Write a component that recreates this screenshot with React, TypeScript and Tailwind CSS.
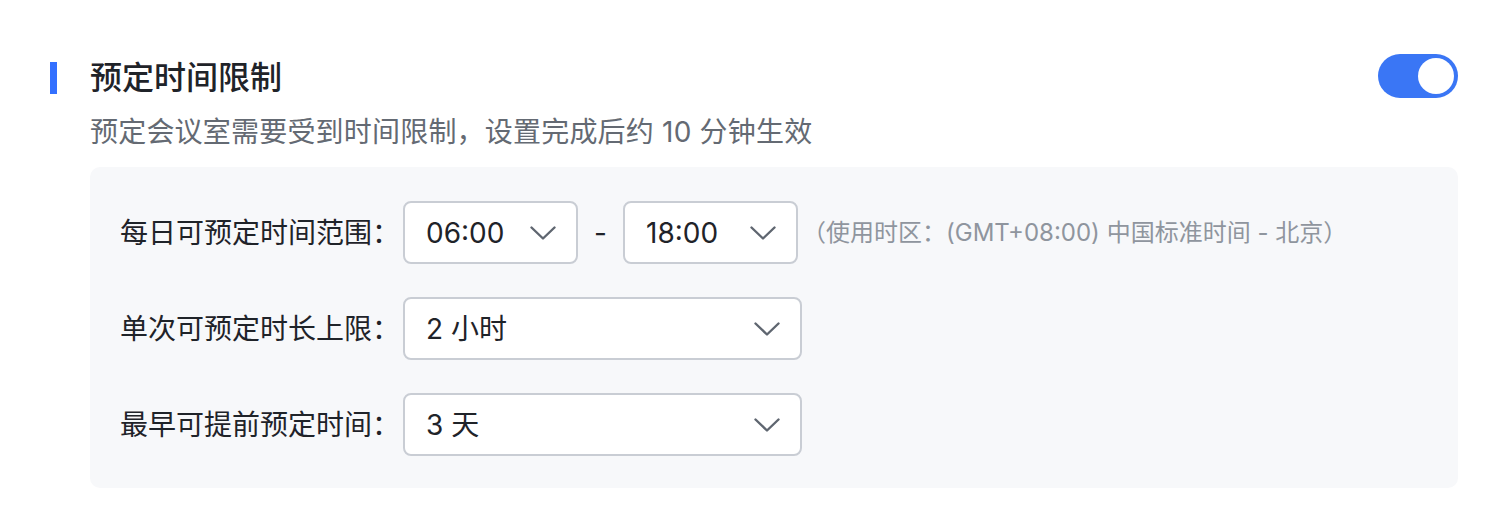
import React from "react";

const Chevron = () => (
  <svg width="26" height="14" viewBox="0 0 26 14" fill="none" className="shrink-0">
    <path d="M1.5 1.5 L13 12.5 L24.5 1.5" stroke="#5f6670" strokeWidth="2.4" strokeLinecap="round" strokeLinejoin="round" />
  </svg>
);

function Select({ value, wide }: { value: string; wide?: boolean }) {
  return (
    <div
      className={`${wide ? "w-[399px]" : "w-[175px]"} h-[63px] shrink-0 bg-white border-2 border-[#c9cdd4] rounded-[8px] flex items-center justify-between pl-[21px] pr-[20px]`}
    >
      <span className="text-[28px] leading-[40px] text-[#1f2329]">{value}</span>
      <Chevron />
    </div>
  );
}

export default function App() {
  return (
    <div
      className="w-[1502px] h-[530px] bg-white pl-[50px] pr-[44px] pt-[54px]"
      style={{ fontFamily: 'Inter, "Noto Sans CJK SC", sans-serif' }}
    >
      <div className="flex justify-between items-start">
        <div className="flex items-center h-[48px]">
          <div className="w-[7px] h-[32px] bg-[#3370ff]" />
          <div className="ml-[33px] text-[32px] leading-[48px] font-medium text-[#1f2329]">预定时间限制</div>
        </div>
        <div className="w-[80px] h-[44px] rounded-full bg-[#3a76f5] flex items-center justify-end pr-[4px]">
          <div className="w-[36px] h-[36px] rounded-full bg-white" />
        </div>
      </div>
      <div className="pl-[40px]">
        <div className="mt-[10px] text-[28px] leading-[40px] text-[#646a73] tracking-[0.2px]">
          预定会议室需要受到时间限制，设置完成后约 10 分钟生效
        </div>
        <div className="mt-[15px] bg-[#f7f8fa] rounded-[10px] pl-[30px] pt-[34px] pb-[32px] flex flex-col gap-[33px]">
          <div className="flex items-center">
            <div className="w-[283px] shrink-0 text-[28px] leading-[40px] text-[#1f2329]">每日可预定时间范围：</div>
            <Select value="06:00" />
            <div className="w-[45px] flex justify-center text-[28px] leading-[40px] text-[#1f2329]">-</div>
            <Select value="18:00" />
            <div className="ml-[4px] text-[24px] leading-[34px] text-[#8f959e]">（使用时区：(GMT+08:00) 中国标准时间 - 北京）</div>
          </div>
          <div className="flex items-center">
            <div className="w-[283px] shrink-0 text-[28px] leading-[40px] text-[#1f2329]">单次可预定时长上限：</div>
            <Select value="2 小时" wide />
          </div>
          <div className="flex items-center">
            <div className="w-[283px] shrink-0 text-[28px] leading-[40px] text-[#1f2329]">最早可提前预定时间：</div>
            <Select value="3 天" wide />
          </div>
        </div>
      </div>
    </div>
  );
}
